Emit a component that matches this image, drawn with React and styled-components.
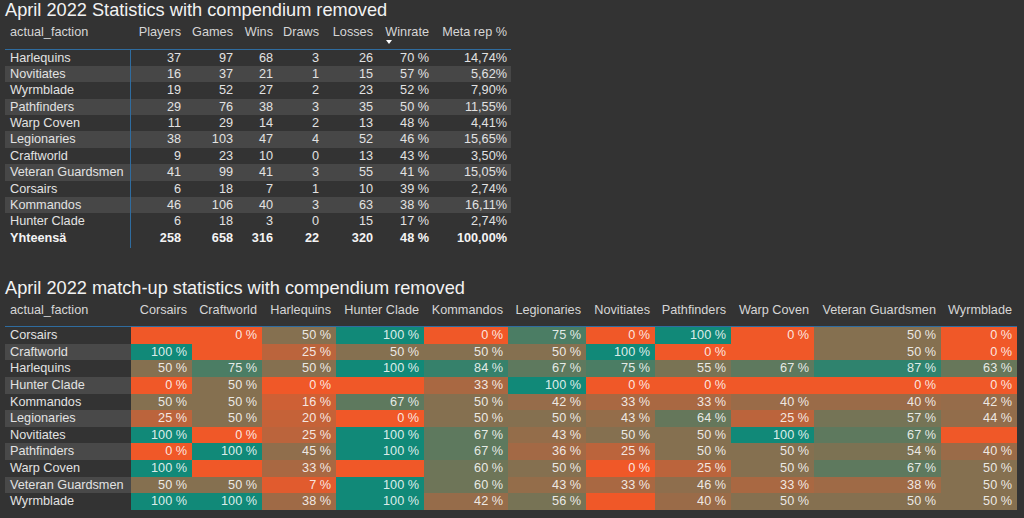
import React from "react";
import styled, { createGlobalStyle } from "styled-components";

const BLUE = "#2f6c9f";

const stats = [
  ["Harlequins", 37, 97, 68, 3, 26, "70 %", "14,74%"],
  ["Novitiates", 16, 37, 21, 1, 15, "57 %", "5,62%"],
  ["Wyrmblade", 19, 52, 27, 2, 23, "52 %", "7,90%"],
  ["Pathfinders", 29, 76, 38, 3, 35, "50 %", "11,55%"],
  ["Warp Coven", 11, 29, 14, 2, 13, "48 %", "4,41%"],
  ["Legionaries", 38, 103, 47, 4, 52, "46 %", "15,65%"],
  ["Craftworld", 9, 23, 10, 0, 13, "43 %", "3,50%"],
  ["Veteran Guardsmen", 41, 99, 41, 3, 55, "41 %", "15,05%"],
  ["Corsairs", 6, 18, 7, 1, 10, "39 %", "2,74%"],
  ["Kommandos", 46, 106, 40, 3, 63, "38 %", "16,11%"],
  ["Hunter Clade", 6, 18, 3, 0, 15, "17 %", "2,74%"],
];
const totals = ["Yhteensä", 258, 658, 316, 22, 320, "48 %", "100,00%"];
const statHeads = ["actual_faction", "Players", "Games", "Wins", "Draws", "Losses", "Winrate", "Meta rep %"];
const statCols = "126px 54px 52px 40px 46px 54px 56px 78px";

const factions = [
  "Corsairs", "Craftworld", "Harlequins", "Hunter Clade", "Kommandos", "Legionaries",
  "Novitiates", "Pathfinders", "Warp Coven", "Veteran Guardsmen", "Wyrmblade",
];
const matrixCols = "126px 61px 70px 74px 88px 84px 78px 69px 76px 83px 127px 76px";
const N = null;
const matrix = [
  [N, 0, 50, 100, 0, 75, 0, 100, 0, 50, 0],
  [100, N, 25, 50, 50, 50, 100, 0, N, 50, 0],
  [50, 75, 50, 100, 84, 67, 75, 55, 67, 87, 63],
  [0, 50, 0, N, 33, 100, 0, 0, N, 0, 0],
  [50, 50, 16, 67, 50, 42, 33, 33, 40, 40, 42],
  [25, 50, 20, 0, 50, 50, 43, 64, 25, 57, 44],
  [100, 0, 25, 100, 67, 43, 50, 50, 100, 67, N],
  [0, 100, 45, 100, 67, 36, 25, 50, 50, 54, 40],
  [100, N, 33, N, 60, 50, 0, 25, 50, 67, 50],
  [50, 50, 7, 100, 60, 43, 33, 46, 33, 38, 50],
  [100, 100, 38, 100, 42, 56, N, 40, 50, 50, 50],
];

// diverging scale: 0 orange, 50 brown, 100 teal
const LOW = [240, 88, 40];
const MID = [133, 112, 80];
const HIGH = [17, 137, 120];
function scale(v) {
  const x = v == null ? 0 : v;
  const [a, b, t] = x <= 50 ? [LOW, MID, x / 50] : [MID, HIGH, (x - 50) / 50];
  const c = a.map((n, i) => Math.round(n + (b[i] - n) * t));
  return `rgb(${c.join(",")})`;
}

const GlobalStyle = createGlobalStyle`
  html, body {
    margin: 0;
    background: #333333;
  }
  body {
    font-family: "Liberation Sans", Arial, sans-serif;
    color: #e0e0e0;
  }
`;

const Page = styled.div`
  width: 1024px;
  height: 518px;
  padding: 0 5px;
  box-sizing: border-box;
  overflow: hidden;
  background: #333333;
`;

const Title = styled.h2`
  margin: 0;
  margin-top: ${(p) => (p.$second ? "30px" : "0")};
  font-size: 18.2px;
  line-height: 20px;
  font-weight: normal;
  color: #f2f2f2;
  white-space: nowrap;
`;

const HeaderRow = styled.div`
  display: grid;
  grid-template-columns: ${(p) => p.$cols};
  height: 29.5px;
  padding-top: 3.8px;
  box-sizing: border-box;
  border-bottom: 1.5px solid ${BLUE};
`;

const HeadCell = styled.div`
  font-size: 12.7px;
  line-height: 16px;
  color: #d6d6d6;
  white-space: nowrap;
  text-align: ${(p) => (p.$left ? "left" : "right")};
  padding: ${(p) => (p.$left ? "0 0 0 5px" : `0 ${p.$pad} 0 0`)};
`;

const SortWrap = styled.span`
  display: inline-flex;
  flex-direction: column;
  align-items: flex-start;
`;

const SortArrow = styled.span`
  width: 0;
  height: 0;
  margin-left: 1px;
  border-left: 3.5px solid transparent;
  border-right: 3.5px solid transparent;
  border-top: 4px solid #ffffff;
`;

const Row = styled.div`
  display: grid;
  grid-template-columns: ${(p) => p.$cols};
  height: ${(p) => p.$h};
  background: ${(p) => (p.$striped ? "#474747" : "transparent")};
  font-size: 12.7px;
  line-height: 16.4px;
  font-weight: ${(p) => (p.$bold ? "bold" : "normal")};
  color: ${(p) => (p.$bold ? "#f4f4f4" : "#e2e2e2")};
`;

const Label = styled.div`
  padding-left: 5px;
  white-space: nowrap;
  border-right: ${(p) => (p.$divider ? `1px solid ${BLUE}` : "none")};
  background: ${(p) => (p.$striped ? "#494949" : "transparent")};
`;

const Num = styled.div`
  text-align: right;
  padding-right: 4px;
  white-space: nowrap;
`;

const HeatCell = styled.div`
  text-align: right;
  padding-right: 5px;
  white-space: nowrap;
  background: ${(p) => p.$bg};
  color: rgba(255, 255, 255, 0.86);
  line-height: 16.6px;
`;

const Table = styled.div`
  width: ${(p) => p.$w};
`;

function StatsTable() {
  return (
    <Table $w="506px">
      <HeaderRow $cols={statCols}>
        {statHeads.map((h, i) => (
          <HeadCell key={h} $left={i === 0} $pad="4px">
            {h === "Winrate" ? (
              <SortWrap>
                {h}
                <SortArrow />
              </SortWrap>
            ) : (
              h
            )}
          </HeadCell>
        ))}
      </HeaderRow>
      {stats.map((r, i) => (
        <Row key={r[0]} $cols={statCols} $h="16.4px" $striped={i % 2 === 1}>
          <Label $divider>{r[0]}</Label>
          {r.slice(1).map((v, j) => (
            <Num key={j}>{v}</Num>
          ))}
        </Row>
      ))}
      <Row $cols={statCols} $h="18px" $bold>
        <Label $divider>{totals[0]}</Label>
        {totals.slice(1).map((v, j) => (
          <Num key={j}>{v}</Num>
        ))}
      </Row>
    </Table>
  );
}

function MatchupTable() {
  return (
    <Table $w="1012px">
      <HeaderRow $cols={matrixCols}>
        <HeadCell $left>actual_faction</HeadCell>
        {factions.map((f) => (
          <HeadCell key={f} $pad="5px">
            {f}
          </HeadCell>
        ))}
      </HeaderRow>
      {factions.map((f, i) => (
        <Row key={f} $cols={matrixCols} $h="16.6px">
          <Label $striped={i % 2 === 1}>{f}</Label>
          {matrix[i].map((v, j) => (
            <HeatCell key={j} $bg={scale(v)}>
              {v == null ? "" : `${v} %`}
            </HeatCell>
          ))}
        </Row>
      ))}
    </Table>
  );
}

export default function App() {
  return (
    <Page>
      <GlobalStyle />
      <Title>April 2022 Statistics with compendium removed</Title>
      <StatsTable />
      <Title $second>April 2022 match-up statistics with compendium removed</Title>
      <MatchupTable />
    </Page>
  );
}
